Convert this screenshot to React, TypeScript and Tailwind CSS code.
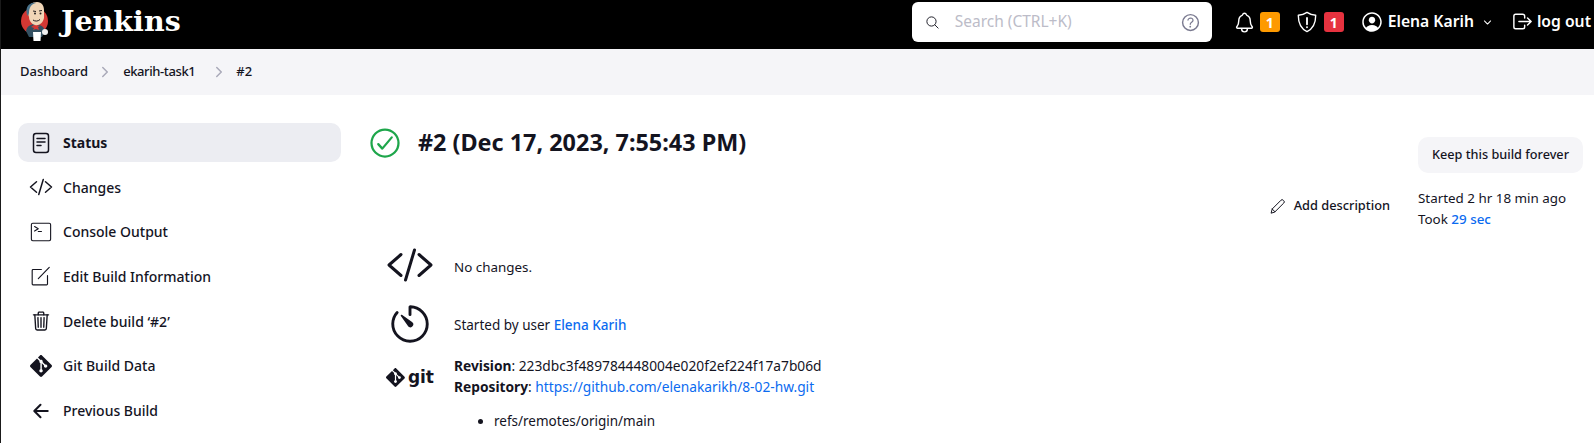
import React from 'react';
import { SiGit } from 'react-icons/si';
import {
    IoNotificationsOutline,
    IoPersonCircleOutline,
    IoLogOutOutline,
    IoSearchOutline,
    IoHelpCircleOutline,
    IoChevronDownOutline,
    IoChevronForwardOutline,
    IoCodeSlashOutline,
    IoTrashOutline,
    IoArrowBackOutline,
    IoTimerOutline,
    IoCheckmarkCircleOutline,
} from 'react-icons/io5';

const FONT = 'font-["Noto_Sans","Open_Sans",sans-serif]';

function JenkinsLogo() {
    return (
        <svg viewBox="0 0 30 40" className="w-[30px] h-[40px]">
            <circle cx="14.5" cy="20" r="13.5" fill="#d33833" />
            <path d="M6 30c1-5 5-7 9-7s9 2 10 7l-3 6H9z" fill="#335061" />
            <path d="M14 24l-3 2 3 1-1 2 3-1 3 1-1-3 2-1-3-1z" fill="#d33833" />
            <path d="M8 9c0-5 4-8 9-8s7 4 7 8v8c-1 5-5 8-9 7-4-1-6-5-6-8-1-2-1-5-1-7z" fill="#f0d6b7" />
            <path d="M9 12c0-5 2-9 7-10-5-1-9 2-9.500 7-.3 2 .5 5 1.500 6z" fill="#49728b" />
            <path d="M13 10l3 .5M19 10l3-.5M13 19c2 1.500 5 1.500 7-.5" stroke="#231f20" strokeWidth="1" fill="none" />
            <circle cx="15" cy="12.500" r="1" fill="#231f20" />
            <circle cx="20.500" cy="12.500" r="1" fill="#231f20" />
            <path d="M13 31h8l-.5 9h-7z" fill="#ffffff" />
            <circle cx="25" cy="31" r="3" fill="#f0f0f0" />
        </svg>
    );
}

function StatusIcon() {
    return (
        <svg viewBox="0 0 24 24" className="w-[24px] h-[24px]" fill="none" stroke="#14141f" strokeWidth="1.500" strokeLinecap="round" strokeLinejoin="round">
            <rect x="4.500" y="2.500" width="15" height="19" rx="2.500" />
            <path d="M8 7.500h8M8 11h8M8 14.500h4" />
        </svg>
    );
}

function TerminalIcon() {
    return (
        <svg viewBox="0 0 24 24" className="w-[22px] h-[22px]" fill="none" stroke="#14141f" strokeWidth="1.200" strokeLinecap="round" strokeLinejoin="round">
            <rect x="1.500" y="2.500" width="21" height="19" rx="1.500" />
            <path d="M5 6l4 2.500L5 11M9 11.500h3.500" />
        </svg>
    );
}

function EditIcon() {
    return (
        <svg viewBox="0 0 24 24" className="w-[21px] h-[21px]" fill="none" stroke="#14141f" strokeWidth="1.300" strokeLinecap="round" strokeLinejoin="round">
            <path d="M13 4H3.500a1 1 0 0 0-1 1v15.500a1 1 0 0 0 1 1H19a1 1 0 0 0 1-1V11" />
            <path d="M9.500 14.500L22 1.500" />
        </svg>
    );
}

function PencilIcon() {
    return (
        <svg viewBox="0 0 16 16" className="w-[16px] h-[16px]" fill="none" stroke="#14141f" strokeWidth="1" strokeLinecap="round" strokeLinejoin="round">
            <path d="M1.200 14.800l1-3.800 8.800-8.800a1.500 1.500 0 0 1 2.200 0l.6.600a1.500 1.500 0 0 1 0 2.200L5 13.800z" />
            <path d="M2.200 11L5 13.800" />
        </svg>
    );
}

function ShieldAlertIcon() {
    return (
        <svg viewBox="0 0 24 24" className="w-[22px] h-[22px]" fill="none" stroke="#ffffff" strokeWidth="1.500" strokeLinecap="round" strokeLinejoin="round">
            <path d="M12 1.500c3 2 6 3 9.500 3.200C21.500 14 18.500 19.500 12 22.500 5.500 19.500 2.500 14 2.500 4.700 6 4.500 9 3.500 12 1.500z" />
            <path d="M12 7.500v7M12 17.500v.2" strokeWidth="2" />
        </svg>
    );
}

const sideItems = [
    { label: 'Status', icon: <StatusIcon />, active: true },
    { label: 'Changes', icon: <IoCodeSlashOutline size={24} /> },
    { label: 'Console Output', icon: <TerminalIcon /> },
    { label: 'Edit Build Information', icon: <EditIcon /> },
    { label: "Delete build ‘#2’", icon: <IoTrashOutline size={22} /> },
    { label: 'Git Build Data', icon: <SiGit size={22} /> },
    { label: 'Previous Build', icon: <IoArrowBackOutline size={22} /> },
];

export default function App() {
    return (
        <div className={`${FONT} h-[443px] w-[1594px] overflow-hidden bg-white text-[#14141f] border-l border-[#1a1a1a]`}>
            {/* header */}
            <header className="h-[49px] bg-black flex items-start text-white">
                <div className="flex items-center ml-[19px] h-[42px]">
                    <JenkinsLogo />
                    <span className='ml-[11px] font-["DejaVu_Serif",serif] font-bold text-[28.500px] leading-[40px]'>Jenkins</span>
                </div>
                <div className="ml-auto flex items-center h-[42px] mt-px">
                    <div className="w-[300px] h-[40px] bg-white rounded-md flex items-center pl-[13px] pr-[10px] text-[#14141f]">
                        <IoSearchOutline size={15} />
                        <span className="ml-[15px] text-[15.500px] text-[#bcbcc8]">Search (CTRL+K)</span>
                        <IoHelpCircleOutline size={23} className="ml-auto text-[#7a7a90]" />
                    </div>
                    <div className="ml-[21px] flex items-center">
                        <IoNotificationsOutline size={23} />
                        <span className="ml-[4px] w-[20px] h-[20px] rounded-[3px] bg-[#fe9a00] flex items-center justify-center text-[14px] font-bold">1</span>
                    </div>
                    <div className="ml-[16px] flex items-center">
                        <ShieldAlertIcon />
                        <span className="ml-[6px] w-[20px] h-[20px] rounded-[3px] bg-[#e6323f] flex items-center justify-center text-[14px] font-bold">1</span>
                    </div>
                    <div className="ml-[16px] flex items-center">
                        <IoPersonCircleOutline size={24} />
                        <span className="ml-[4px] text-[15.700px] font-semibold">Elena Karih</span>
                        <IoChevronDownOutline size={11} className="ml-[8px]" />
                    </div>
                    <div className="ml-[18px] mr-[3px] flex items-center">
                        <IoLogOutOutline size={23} />
                        <span className="ml-[3px] text-[15.700px] font-semibold">log out</span>
                    </div>
                </div>
            </header>

            {/* breadcrumb */}
            <nav className="h-[46px] bg-[#f5f5f8] flex items-center pl-[19px] text-[13px] font-medium">
                <span>Dashboard</span>
                <IoChevronForwardOutline size={16} className="ml-[9px] mr-[10px] text-[#a9a9b9]" />
                <span className="tracking-[-0.4px]">ekarih-task1</span>
                <IoChevronForwardOutline size={16} className="ml-[16px] mr-[9px] text-[#a9a9b9]" />
                <span>#2</span>
            </nav>

            <div className="flex pt-[28px]">
                {/* sidebar */}
                <aside className="w-[323px] ml-[17px] shrink-0 flex flex-col gap-[5.700px]">
                    {sideItems.map(item => (
                        <div
                            key={item.label}
                            className={`h-[39px] rounded-[10px] flex items-center text-[14px] ${item.active ? 'bg-[#ecedf2] font-bold' : 'font-medium'}`}
                        >
                            <span className="w-[45px] flex justify-center shrink-0">{item.icon}</span>
                            <span>{item.label}</span>
                        </div>
                    ))}
                </aside>

                {/* main */}
                <main className="flex-1 ml-[30px]">
                    <div className="flex items-center h-[39px]">
                        <IoCheckmarkCircleOutline size={36} className="text-[#1ea64b] -ml-[4px]" />
                        <h1 className="ml-[15px] text-[23.400px] font-bold">#2 (Dec 17, 2023, 7:55:43 PM)</h1>
                    </div>

                    <div className="flex justify-end items-center mt-[24px] pr-[28px] h-[40px] text-[12.800px] font-medium">
                        <PencilIcon />
                        <span className="ml-[8px]">Add description</span>
                    </div>

                    <div className="mt-[14px] pl-[15px] flex flex-col text-[13.750px]">
                        <div className="flex items-center h-[50px]">
                            <span className="w-[48px] flex justify-center"><IoCodeSlashOutline size={50} /></span>
                            <span className="ml-[20px] mt-[4px] text-[13.400px]">No changes.</span>
                        </div>
                        <div className="flex items-center h-[56px] mt-[6px]">
                            <span className="w-[48px] flex justify-center"><IoTimerOutline size={46} /></span>
                            <span className="ml-[20px] mt-[2px] text-[13.500px]">Started by user <a className="text-[#0b6bf0] font-medium">Elena Karih</a></span>
                        </div>
                        <div className="flex items-center mt-[3px]">
                            <span className="w-[48px] flex items-center justify-center gap-[3px] mt-[3px]">
                                <SiGit size={19} />
                                <span className='font-["DejaVu_Sans",sans-serif] font-bold text-[17px] leading-none'>git</span>
                            </span>
                            <div className="ml-[20px] leading-[21px]">
                                <div><b>Revision</b>: 223dbc3f489784448004e020f2ef224f17a7b06d</div>
                                <div><b>Repository</b>: <a className="text-[#0b6bf0]">https://github.com/elenakarikh/8-02-hw.git</a></div>
                            </div>
                        </div>
                        <ul className="list-disc ml-[108px] mt-[14px] text-[13.500px]">
                            <li>refs/remotes/origin/main</li>
                        </ul>
                    </div>
                </main>

                {/* right column */}
                <aside className="w-[165px] shrink-0 mr-[11px] mt-[14px] text-[13.400px]">
                    <div className="h-[36px] rounded-[10px] bg-[#f5f5f8] flex items-center justify-center font-medium text-[12.700px]">Keep this build forever</div>
                    <div className="mt-[15px] leading-[21px]">
                        <div>Started 2 hr 18 min ago</div>
                        <div>Took <a className="text-[#0b6bf0] font-medium">29 sec</a></div>
                    </div>
                </aside>
            </div>
        </div>
    );
}
